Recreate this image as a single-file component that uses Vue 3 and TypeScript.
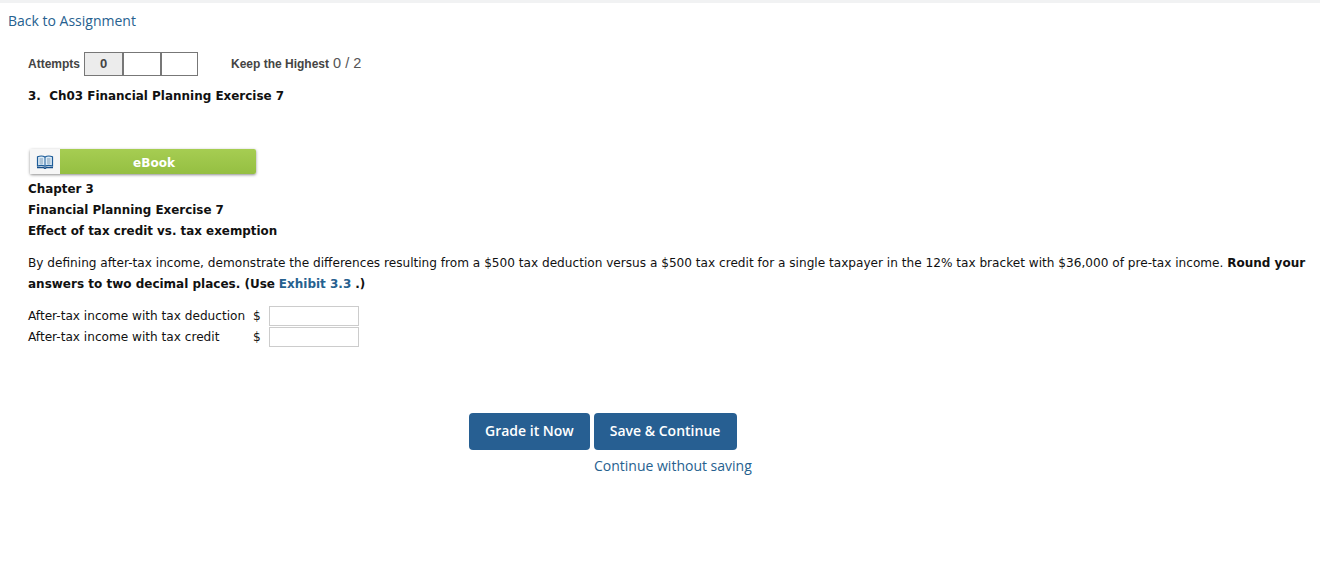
<template>
  <div class="page">
    <div class="top-rule"></div>
    <a class="back-link" href="#">Back to Assignment</a>

    <div class="attempts-row">
      <span class="attempts-label">Attempts</span>
      <div class="attempt-boxes">
        <span v-for="(box, i) in attemptBoxes" :key="i" class="attempt-box" :class="{ used: box !== '' }">{{ box }}</span>
      </div>
      <span class="highest"><b>Keep the Highest</b> 0 / 2</span>
    </div>

    <h2 class="question-title">3.&nbsp; Ch03 Financial Planning Exercise 7</h2>

    <div class="ebook">
      <span class="ebook-icon">
        <svg width="18" height="14" viewBox="0 0 18 14">
          <path d="M1 12.500h6.500L9 13.500l1.500-1H17" fill="none" stroke="#174f8a" stroke-width="1.500" />
          <path d="M1.500 1.800C4 .8 7 .8 9 2c2-1.200 5-1.200 7.500-.2V11C14 10.200 11 10.200 9 11.300 7 10.200 4 10.200 1.500 11z" fill="#dcebf7" stroke="#1d5c98" stroke-width="1.200" />
          <path d="M9 2v9" stroke="#1d5c98" />
          <path d="M3.500 4h3.500M3.500 6h3.500M3.500 8h3.500M11 4h3.500M11 6h3.500M11 8h3.500" stroke="#7f9cb6" />
        </svg>
      </span>
      <span class="ebook-label">eBook</span>
    </div>

    <div class="heading-lines">
      <p>Chapter 3</p>
      <p>Financial Planning Exercise 7</p>
      <p>Effect of tax credit vs. tax exemption</p>
    </div>

    <p class="prompt">
      By defining after-tax income, demonstrate the differences resulting from a $500 tax deduction versus a $500 tax credit for a single taxpayer in the 12% tax bracket with $36,000 of pre-tax income.
      <b>Round your</b> <b>answers to two decimal places. (Use</b> <a href="#"><b>Exhibit 3.3</b></a> <b>.)</b>
    </p>

    <div class="answers">
      <template v-for="label in answerLabels" :key="label">
        <span>{{ label }}</span>
        <span class="dollar">$</span>
        <input class="answer-input" type="text" />
      </template>
    </div>

    <div class="actions">
      <div class="buttons">
        <button class="btn">Grade it Now</button>
        <button class="btn">Save &amp; Continue</button>
      </div>
      <a class="skip-link" href="#">Continue without saving</a>
    </div>
  </div>
</template>

<script setup lang="ts">
const attemptBoxes: string[] = ['0', '', '']
const answerLabels: string[] = ['After-tax income with tax deduction', 'After-tax income with tax credit']
</script>

<style>
html, body {
  background: #fff;
}
</style>

<style scoped>
.page {
  height: 573px;
  overflow: hidden;
  box-sizing: border-box;
  font-family: "DejaVu Sans", Verdana, sans-serif;
  font-size: 12.12px;
  color: #111;
}

.top-rule {
  height: 3px;
  background: #f1f2f3;
}

.back-link {
  display: block;
  margin: 9px 0 0 8px;
  font-family: "Open Sans", sans-serif;
  font-size: 14px;
  line-height: 18px;
  color: #26618f;
  text-decoration: none;
}

.attempts-row {
  display: flex;
  align-items: center;
  margin: 22px 0 0 28px;
  font-family: "Liberation Sans", Arial, sans-serif;
  font-size: 12px;
  color: #444;
  height: 24px;
}

.attempts-label {
  font-weight: 700;
  margin-right: 4px;
}

.attempt-boxes {
  display: flex;
}

.attempt-box {
  box-sizing: border-box;
  width: 38px;
  height: 24px;
  border: 1px solid #777;
  border-right-width: 0;
  text-align: center;
  line-height: 22px;
  font-size: 13px;
  font-weight: 700;
}

.attempt-box + .attempt-box {
  border-left-width: 2px;
}

.attempt-box:last-child {
  border-right-width: 1px;
}

.attempt-box.used {
  background: #ececec;
}

.highest {
  margin-left: 33px;
  padding-bottom: 2px;
  font-size: 14.5px;
  color: #555;
}

.highest b {
  font-size: 12px;
  color: #444;
}

.question-title {
  margin: 12px 0 0 28px;
  font-size: 11.96px;
  line-height: 16px;
  font-weight: 700;
  color: #111;
}

.ebook {
  display: flex;
  width: 226px;
  height: 25px;
  margin: 45px 0 0 30px;
  border-radius: 2px;
  box-shadow: 0 1px 3px rgba(0, 0, 0, 0.45);
}

.ebook-icon {
  display: flex;
  align-items: center;
  justify-content: center;
  width: 30px;
  background: #f6f6f6;
}

.ebook-label {
  flex: 1;
  box-sizing: border-box;
  padding-right: 8px;
  background: linear-gradient(#a6cd52, #95bf42);
  border-radius: 0 2px 2px 0;
  color: #fff;
  font-size: 12px;
  font-weight: 700;
  text-align: center;
  line-height: 29px;
}

.heading-lines {
  margin: 5px 0 0 28px;
  font-size: 11.9px;
  font-weight: 700;
}

.heading-lines p {
  margin: 0;
  line-height: 21px;
}

.prompt {
  margin: 11px 14px 0 28px;
  line-height: 21px;
}

.prompt b {
  font-size: 12px;
}

.prompt a {
  color: #26618f;
  text-decoration: none;
}

.answers {
  display: grid;
  grid-template-columns: 225px 16px 90px;
  column-gap: 0;
  row-gap: 1px;
  align-items: center;
  margin: 11px 0 0 28px;
}

.dollar {
  text-align: left;
}

.answer-input {
  box-sizing: border-box;
  width: 90px;
  height: 20px;
  margin: 0;
  padding: 0;
  border: 1px solid #ccc;
  background: #fff;
}

.actions {
  display: flex;
  flex-direction: column;
  align-items: flex-start;
  margin: 66px 0 0 469px;
  font-family: "Open Sans", sans-serif;
}

.buttons {
  display: flex;
  gap: 4px;
}

.btn {
  height: 37px;
  padding: 0 16px 2px;
  border: 0;
  border-radius: 4px;
  background: #275f92;
  color: #fff;
  font-family: inherit;
  font-size: 14px;
  font-weight: 600;
}

.btn + .btn {
  padding-right: 17px;
}

.skip-link {
  margin: 6px 0 0 125px;
  font-size: 14px;
  line-height: 19px;
  color: #26618f;
  text-decoration: none;
}
</style>
